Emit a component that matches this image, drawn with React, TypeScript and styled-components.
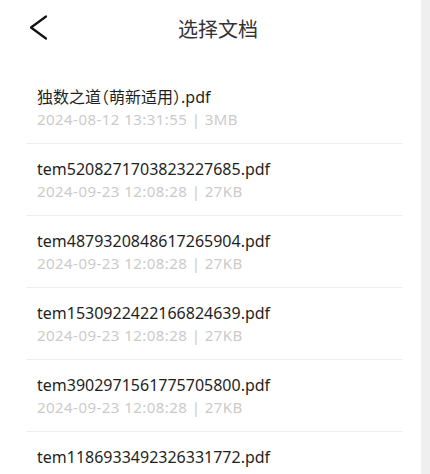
import styled, { createGlobalStyle } from 'styled-components'

const GlobalStyle = createGlobalStyle`
  html, body {
    margin: 0;
    padding: 0;
    background: #ffffff;
  }
  body {
    font-family: "Noto Sans", "Noto Sans CJK SC", sans-serif;
  }
`

const Screen = styled.div`
  display: flex;
  width: 430px;
  height: 474px;
  overflow: hidden;
  background: #ffffff;
`

const Main = styled.main`
  flex: 0 0 421px;
  display: flex;
  flex-direction: column;
`

const Scrollbar = styled.aside`
  flex: 1;
  background: #efefef;
`

const Header = styled.header`
  flex-shrink: 0;
  display: flex;
  align-items: center;
  height: 56px;
`

const BackButton = styled.button`
  display: flex;
  align-items: center;
  justify-content: center;
  width: 20px;
  height: 28px;
  margin-left: 28px;
  padding: 0;
  border: 0;
  background: none;
  cursor: pointer;
`

const Title = styled.h1`
  flex: 1;
  margin: 0;
  text-align: center;
  font-family: "Noto Sans CJK SC", sans-serif;
  font-size: 20px;
  font-weight: 400;
  color: #333333;
`

const Spacer = styled.div`
  width: 33px;
`

const List = styled.ul`
  flex-shrink: 0;
  list-style: none;
  margin: 0;
  padding: 16px 0 0;
`

const Row = styled.li`
  margin: 0 18px 0 26px;
  padding: 14px 0 12px 11px;
  border-bottom: 1px solid #efefef;
`

const FileName = styled.div`
  font-size: 16px;
  line-height: 22px;
  color: #1f1f1f;
  white-space: nowrap;
  font-feature-settings: "halt";
`

const Meta = styled.div`
  font-size: 15px;
  line-height: 23px;
  letter-spacing: 0.45px;
  color: #cbcbcb;
  white-space: nowrap;
`

const files = [
  { name: '独数之道（萌新适用）.pdf', time: '2024-08-12 13:31:55', size: '3MB' },
  { name: 'tem5208271703823227685.pdf', time: '2024-09-23 12:08:28', size: '27KB' },
  { name: 'tem4879320848617265904.pdf', time: '2024-09-23 12:08:28', size: '27KB' },
  { name: 'tem1530922422166824639.pdf', time: '2024-09-23 12:08:28', size: '27KB' },
  { name: 'tem3902971561775705800.pdf', time: '2024-09-23 12:08:28', size: '27KB' },
  { name: 'tem1186933492326331772.pdf', time: '2024-09-23 12:08:28', size: '27KB' },
]

export default function App() {
  return (
    <>
      <GlobalStyle />
      <Screen>
        <Main>
          <Header>
            <BackButton aria-label="返回">
              <svg width="20" height="28" viewBox="0 0 20 28">
                <path d="M18 2.5 L3 13.5 L18 24.5" fill="none" stroke="#111" strokeWidth="2.2" strokeLinecap="round" strokeLinejoin="round" />
              </svg>
            </BackButton>
            <Title>选择文档</Title>
            <Spacer />
          </Header>
          <List>
            {files.map((f) => (
              <Row key={f.name}>
                <FileName>{f.name}</FileName>
                <Meta>{f.time} | {f.size}</Meta>
              </Row>
            ))}
          </List>
        </Main>
        <Scrollbar />
      </Screen>
    </>
  )
}
